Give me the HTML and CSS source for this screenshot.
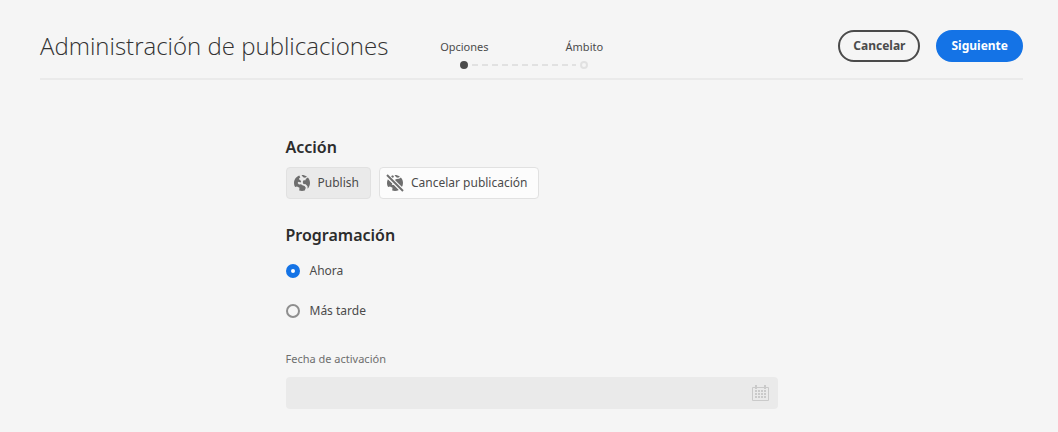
FILE: index.html
```html
<!DOCTYPE html>
<html lang="es">
<head>
<meta charset="utf-8">
<meta name="viewport" content="width=device-width, initial-scale=1">
<title>Administración de publicaciones</title>
<link rel="stylesheet" href="styles.css">
</head>
<body>
<div class="wizard">
  <header class="wizard-header">
    <h1 class="wizard-title">Administración de publicaciones</h1>
    <ol class="steps">
      <li class="step step-current" aria-current="step"><span class="step-label">Opciones</span><span class="step-dot"></span></li>
      <li class="step"><span class="step-label">Ámbito</span><span class="step-dot"></span></li>
    </ol>
    <div class="wizard-actions">
      <button class="button button-secondary" type="button">Cancelar</button>
      <button class="button button-primary" type="submit" form="options">Siguiente</button>
    </div>
  </header>
  <main>
    <form class="options" id="options">
      <h2 class="section-title">Acción</h2>
      <div class="choices">
        <button class="choice choice-selected" type="button" aria-pressed="true">
          <svg class="choice-icon" viewBox="0 0 18 18" aria-hidden="true">
            <path d="M6.300 1.500C3.200 2.600 1 5.500 1 9C1 10.500 1.400 11.900 2.100 13.100L4 12.400L6.500 13.800L6.200 16.500C7.100 16.800 8 17 9 17C10 17 10.900 16.800 11.800 16.500L12.800 13.800L11.600 12L9.400 11.300L8 10.300L6 10.600L4.600 9L5.500 7.800L7.600 8.600L8.200 7L6.400 5.700L6.100 4.300L7.300 3.500Z"/>
            <path d="M8.500 1C10.500 .9 12.500 1.600 14 2.800L12 3.700L10.200 3.200ZM14.900 3.600C16.300 5.100 17 7 17 9C17 11.200 16.100 13.200 14.700 14.700L14.500 12.200L12.700 10.300L10.400 9.900L9.700 8L10.800 6L12.200 6.400L13 4.700Z"/>
          </svg>
          <span>Publish</span>
        </button>
        <button class="choice" type="button" aria-pressed="false">
          <svg class="choice-icon" viewBox="0 0 18 18" aria-hidden="true">
            <path d="M4.600 2.400C5.300 1.900 6.100 1.500 7 1.300L8 2.800L6.500 4.300ZM8.500 1C10.500 .9 12.500 1.600 14 2.800L12 3.700L10.200 3.200ZM14.900 3.600C16.300 5.100 17 7 17 9C17 10.500 16.600 11.900 15.900 13.100L8.600 5.900L10.600 4.900L13 4.700ZM1.900 5.200L6.300 9.600L5.800 10.700L8 10.900L12.900 15.900C11.700 16.700 10.400 17 9 17C8 17 7.100 16.800 6.200 16.500L6.500 13.800L4 12.400L2.100 13.100C.7 10.800 .6 7.700 1.900 5.200Z"/>
            <path class="icon-gap" d="M1 1L17 17"/>
            <path class="icon-slash" d="M1 1L17 17"/>
          </svg>
          <span>Cancelar publicación</span>
        </button>
      </div>
      <fieldset class="schedule">
        <legend class="section-title">Programación</legend>
        <label class="radio"><input type="radio" name="schedule" value="now" checked><span>Ahora</span></label>
        <label class="radio"><input type="radio" name="schedule" value="later"><span>Más tarde</span></label>
      </fieldset>
      <label class="date-label" for="activation">Fecha de activación</label>
      <div class="date-field">
        <input class="date-input" id="activation" type="text" disabled>
        <button class="date-button" type="button" aria-label="Calendario" disabled>
          <svg class="date-icon" viewBox="0 0 18 18" aria-hidden="true">
            <path class="calendar-frame" d="M.5 3.500H16.500V16.500H.5Z"/>
            <path d="M3 1H5V5H3ZM12 1H14V5H12Z"/>
            <path d="M3 6H5V8H3ZM6 6H8V8H6ZM9 6H11V8H9ZM12 6H14V8H12ZM3 9H5V11H3ZM6 9H8V11H6ZM9 9H11V11H9ZM12 9H14V11H12ZM3 12H5V14H3ZM6 12H8V14H6ZM9 12H11V14H9ZM12 12H14V14H12Z"/>
          </svg>
        </button>
      </div>
    </form>
  </main>
</div>
</body>
</html>
```
FILE: styles.css
```css
* {
  box-sizing: border-box;
}

body {
  margin: 0;
  background: #f5f5f5;
  color: #4b4b4b;
  font-family: "Noto Sans", "Open Sans", sans-serif;
  font-size: 12px;
  line-height: 20px;
}

button,
input {
  font: inherit;
  color: inherit;
}

.wizard {
  padding: 14px 35px 23px 40px;
}

.wizard-header {
  display: flex;
  align-items: center;
  height: 66px;
  border-bottom: 2px solid #eaeaea;
}

.wizard-title {
  margin: 0;
  color: #323232;
  font-family: "Open Sans", "Noto Sans", sans-serif;
  font-size: 24px;
  font-weight: 300;
  line-height: 36px;
  white-space: nowrap;
}

.steps {
  display: flex;
  margin: 16px 0 0 16px;
  padding: 0;
  list-style: none;
  font-size: 11px;
}

.step {
  position: relative;
  display: flex;
  flex-direction: column;
  align-items: center;
  gap: 6px;
  width: 120px;
}

.step-label {
  line-height: 16px;
}

.step-dot {
  width: 8px;
  height: 8px;
  border: 2px solid #e1e1e1;
  border-radius: 50%;
}

.step-current .step-dot {
  border-color: #4b4b4b;
  background: #4b4b4b;
}

.step-current::after {
  content: "";
  position: absolute;
  left: 68px;
  bottom: 3px;
  width: 104px;
  height: 2px;
  background: repeating-linear-gradient(90deg, #e1e1e1 0 6px, transparent 6px 10px);
}

.wizard-actions {
  display: flex;
  gap: 16px;
  margin-left: auto;
}

.button {
  height: 32px;
  padding: 0 13px;
  border: 2px solid #4b4b4b;
  border-radius: 16px;
  background: transparent;
  font-weight: 700;
}

.button-primary {
  border-color: #1473e6;
  background: #1473e6;
  color: #fff;
}

.options {
  max-width: 492px;
  margin: 55px auto 0;
}

.section-title {
  margin: 0;
  padding: 0;
  color: #2c2c2c;
  font-size: 16px;
  font-weight: 600;
  line-height: 24px;
}

.choices {
  display: flex;
  gap: 8px;
  margin-top: 8px;
}

.choice {
  display: flex;
  align-items: center;
  gap: 7px;
  height: 32px;
  padding: 0 11px 0 6px;
  border: 1px solid #e1e1e1;
  border-radius: 4px;
  background: #fcfcfc;
  white-space: nowrap;
}

.choice-selected {
  background: #eaeaea;
}

.choice-icon {
  width: 18px;
  height: 18px;
  fill: #6e6e6e;
}

.icon-gap,
.icon-slash {
  fill: none;
  stroke: #6e6e6e;
  stroke-width: 2;
}

.icon-gap {
  stroke: #fcfcfc;
  stroke-width: 4;
}

.schedule {
  margin: 24px 0 0;
  padding: 0;
  border: 0;
}

.radio {
  display: flex;
  align-items: center;
  gap: 10px;
  height: 40px;
}

.schedule .section-title {
  margin-bottom: 4px;
}

.radio input {
  appearance: none;
  width: 14px;
  height: 14px;
  margin: 0;
  border: 2px solid #8e8e8e;
  border-radius: 50%;
}

.radio input:checked {
  border: 5px solid #1473e6;
  background: #fff;
}

.date-label {
  display: block;
  margin-top: 20px;
  color: #6e6e6e;
  font-size: 11px;
  line-height: 16px;
}

.date-field {
  display: flex;
  height: 32px;
  margin-top: 10px;
  border-radius: 4px;
  background: #eaeaea;
}

.date-input {
  flex: 1;
  min-width: 0;
  padding: 0 12px;
  border: 0;
  background: transparent;
}

.date-button {
  display: flex;
  align-items: center;
  padding: 0 8px;
  border: 0;
  background: transparent;
}

.date-icon {
  width: 18px;
  height: 18px;
  fill: #cacaca;
}

.calendar-frame {
  fill: none;
  stroke: #cacaca;
}
```
